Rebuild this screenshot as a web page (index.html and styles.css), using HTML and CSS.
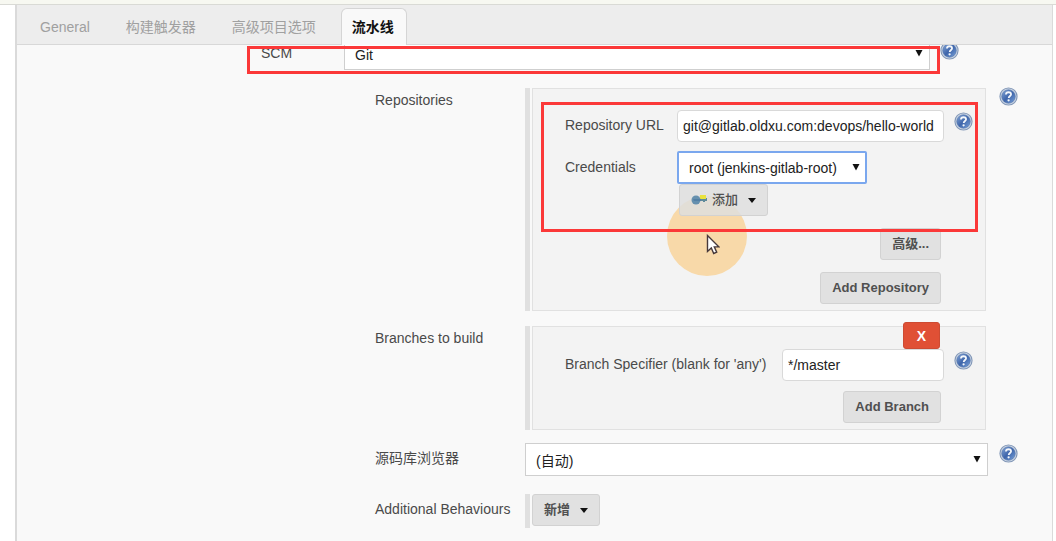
FILE: index.html
```html
<!DOCTYPE html>
<html lang="zh-CN">
<head>
<meta charset="utf-8">
<title>流水线</title>
<link rel="stylesheet" href="styles.css">
</head>
<body>
<svg class="sprite" aria-hidden="true">
  <defs>
    <linearGradient id="ball" x1="0" y1="0" x2="1" y2="1">
      <stop offset="0" stop-color="#86a8d8"/>
      <stop offset="0.5" stop-color="#3f66ab"/>
      <stop offset="1" stop-color="#7aa3da"/>
    </linearGradient>
  </defs>
  <symbol id="help" viewBox="0 0 20 20">
    <circle cx="10" cy="10" r="9" fill="#d3dce8" stroke="#8398b8" stroke-width="1.2"/>
    <circle cx="10" cy="10" r="7.2" fill="url(#ball)" stroke="#5574aa" stroke-width=".6"/>
    <path d="M7.3 7.9C7.4 6.2 8.500 5.500 10 5.500c1.600 0 2.700.8 2.700 2.200 0 1.700-2.300 1.900-2.500 3.900" fill="none" stroke="#f4f7fb" stroke-width="1.900"/>
    <circle cx="10.100" cy="14" r="1.200" fill="#f4f7fb"/>
  </symbol>
  <symbol id="arrow" viewBox="0 0 8 8"><path d="M.5 1h7L4 7.500z" fill="#111"/></symbol>
  <symbol id="caret" viewBox="0 0 8 5"><path d="M0 0h8L4 5z" fill="#111"/></symbol>
</svg>
<div class="breadcrumb-edge"></div>
<main class="panel">
  <nav class="tabs">
    <a class="tab" href="#general">General</a>
    <a class="tab" href="#triggers">构建触发器</a>
    <a class="tab" href="#advanced">高级项目选项</a>
    <a class="tab active" href="#pipeline">流水线</a>
  </nav>
  <form class="form">
    <div class="scm-row">
      <label for="scm">SCM</label>
      <div class="select-box">
        <select id="scm"><option>Git</option></select>
        <svg class="arrow"><use href="#arrow"/></svg>
      </div>
      <button type="button" class="help" aria-label="Help"><svg><use href="#help"/></svg></button>
      <div class="mark mark-scm"></div>
    </div>

    <section class="row">
      <span class="label">Repositories</span>
      <div class="chunk">
        <div class="card repo-card">
          <div class="halo"></div>
          <div class="field repo-field">
            <label for="url">Repository URL</label>
            <input id="url" type="text" value="git@gitlab.oldxu.com:devops/hello-world">
            <button type="button" class="help" aria-label="Help"><svg><use href="#help"/></svg></button>
          </div>
          <div class="field repo-field">
            <label for="cred">Credentials</label>
            <div class="cred">
              <div class="select-box focused">
                <select id="cred"><option>root (jenkins-gitlab-root)</option></select>
                <svg class="arrow"><use href="#arrow"/></svg>
              </div>
              <button type="button" class="btn add-cred">
                <svg class="key" viewBox="0 0 17 12"><path d="M7 4h9v3h-2v1h-2V7H7z" fill="#608b9b"/><path d="M9 1h6v4H9z" fill="#e9e23e"/><circle cx="5" cy="6" r="4.500" fill="#6690ae"/><path d="M2 5h8v2H3z" fill="#527fa5"/></svg>
                添加
                <svg class="caret"><use href="#caret"/></svg>
              </button>
            </div>
          </div>
          <div class="actions">
            <button type="button" class="btn">高级...</button>
            <button type="button" class="btn">Add Repository</button>
          </div>
          <div class="mark mark-repo"></div>
          <svg class="pointer" viewBox="0 0 14 21"><path d="M1.500 1.500v16l3.800-3.500 2.400 5.500 3-1.300-2.400-5.300h4.700z" fill="#fff" stroke="#47393b" stroke-width="1.400"/></svg>
        </div>
      </div>
      <button type="button" class="help" aria-label="Help"><svg><use href="#help"/></svg></button>
    </section>

    <section class="row">
      <span class="label">Branches to build</span>
      <div class="chunk">
        <div class="card branch-card">
          <button type="button" class="delete">X</button>
          <div class="field branch-field">
            <label for="branch">Branch Specifier (blank for 'any')</label>
            <input id="branch" type="text" value="*/master">
            <button type="button" class="help" aria-label="Help"><svg><use href="#help"/></svg></button>
          </div>
          <div class="actions">
            <button type="button" class="btn">Add Branch</button>
          </div>
        </div>
      </div>
    </section>

    <section class="row browser-row">
      <label class="label" for="browser">源码库浏览器</label>
      <div class="select-box">
        <select id="browser"><option>(自动)</option></select>
        <svg class="arrow"><use href="#arrow"/></svg>
      </div>
      <button type="button" class="help" aria-label="Help"><svg><use href="#help"/></svg></button>
    </section>

    <section class="row extra-row">
      <span class="label">Additional Behaviours</span>
      <div class="chunk">
        <button type="button" class="btn">新增 <svg class="caret"><use href="#caret"/></svg></button>
      </div>
    </section>
  </form>
</main>
</body>
</html>
```
FILE: styles.css
```css
* {
  box-sizing: border-box;
}

body {
  margin: 0;
  min-height: 100vh;
  display: flex;
  flex-direction: column;
  background: #fff;
  color: #4a4a4a;
  font: 14px/20px "Liberation Sans", Arial, "Noto Sans CJK SC", sans-serif;
}

.sprite {
  position: absolute;
  width: 0;
  height: 0;
}

.breadcrumb-edge {
  height: 5px;
  background: #f7f8f1;
  border-bottom: 1px solid #d9dad5;
}

.panel {
  flex: 1;
  margin: 0 3px 0 15px;
  border: solid #dadada;
  border-width: 0 1px 0 2px;
  background: #f9f9f9;
}

.tabs {
  display: flex;
  align-items: flex-end;
  height: 40px;
  padding-left: 10px;
  background: #ededed;
  border-bottom: 1px solid #d8d8d8;
}

.tab {
  height: 37px;
  margin-bottom: -1px;
  padding: 8px 12px 0;
  border: 1px solid transparent;
  border-bottom: 0;
  color: #a0a0a0;
  text-decoration: none;
}

.tab + .tab {
  margin-left: 10px;
}

.tab.active {
  margin-left: 12px;
  padding: 8px 12px 0 10px;
  border-color: #d5d5d5;
  border-radius: 6px 6px 0 0;
  background: #f9f9f9;
  color: #111;
  font-weight: bold;
}

.form {
  overflow: hidden;
  padding: 0 33px 12px 0;
}

.scm-row {
  position: relative;
  display: grid;
  grid-template-columns: 83px 1fr 20px;
  margin: -8px 60px 0 244px;
}

.scm-row > label {
  padding-top: 6px;
}

.scm-row > .help {
  margin: 4px 0 0 1px;
}

.scm-row > .select-box {
  margin-right: 9px;
}

.row {
  display: grid;
  grid-template-columns: 150px 1fr 31px;
  margin: 18px 0 0 358px;
}

.row + .row {
  margin-top: 15px;
}

.row.browser-row {
  margin-top: 13px;
}

.row.extra-row {
  margin-top: 18px;
}

.label {
  padding-top: 2px;
  white-space: nowrap;
}

.browser-row .label,
.extra-row .label {
  padding-top: 5px;
}

.chunk {
  margin-right: 2px;
  padding-left: 2px;
  border-left: 5px solid #e0e0e0;
}

.extra-row .chunk {
  height: 34px;
}

.row > .help {
  margin-left: 11px;
}

.row > .help:last-child {
  margin-top: -1px;
}

.browser-row > .help:last-child {
  margin-top: 1px;
}

.card {
  position: relative;
  padding: 21px 12px 6px 32px;
  border: 1px solid #e1e1e1;
  background: #f3f3f3;
}

.field {
  display: grid;
  align-items: start;
}

.field > label {
  padding-top: 5px;
}

.repo-field {
  grid-template-columns: 112px 1fr 29px;
}

.repo-field + .repo-field {
  margin-top: 9px;
}

.repo-field + .repo-field > label {
  padding-top: 6px;
}

.branch-field {
  grid-template-columns: 217px 1fr 29px;
}

.field > .help {
  margin: 2px 0 0 10px;
}

input,
select {
  display: block;
  width: 100%;
  margin: 0;
  background: #fff;
  color: #222;
  font: inherit;
}

input {
  height: 32px;
  padding: 0 5px;
  border: 1px solid #d9d9d9;
  border-radius: 4px;
}

select {
  height: 33px;
  padding: 3px 24px 0 10px;
  border: 1px solid #cfcfcf;
  border-radius: 0;
  appearance: none;
}

.select-box {
  position: relative;
}

.focused select {
  padding-top: 1px;
  border: 2px solid #7aa7ee;
  border-radius: 2px;
}

.arrow {
  position: absolute;
  right: 7px;
  top: 12px;
  width: 8px;
  height: 8px;
  pointer-events: none;
}

.cred {
  display: flex;
  flex-direction: column;
  align-items: flex-start;
}

.cred .select-box {
  width: 190px;
}

.btn {
  display: inline-flex;
  align-items: center;
  height: 32px;
  padding: 0 11px;
  border: 1px solid #d2d2d2;
  border-radius: 3px;
  background: #e1e1e1;
  color: #505050;
  font: bold 13px/20px "Liberation Sans", Arial, "Noto Sans CJK SC", sans-serif;
}

.add-cred {
  position: relative;
  margin-left: 2px;
  font-weight: 500;
  background: rgba(222, 222, 222, 0.85);
}

.key {
  width: 17px;
  height: 12px;
  margin-right: 4px;
}

.caret {
  width: 8px;
  height: 5px;
  margin-left: 10px;
}

.actions {
  display: flex;
  flex-direction: column;
  align-items: flex-end;
  gap: 12px;
  margin: 12px 32px 0 0;
}

.branch-card {
  padding-top: 22px;
}

.branch-card .actions {
  margin-top: 10px;
}

.delete {
  position: absolute;
  top: -5px;
  right: 45px;
  width: 37px;
  height: 27px;
  padding: 0;
  border: 1px solid #cd4b33;
  border-radius: 3px;
  background: #e05035;
  color: #fff;
  font: bold 14px/20px "Liberation Sans", Arial, sans-serif;
}

.help {
  width: 19px;
  height: 19px;
  padding: 0;
  border: 0;
  background: none;
}

.help svg {
  display: block;
  width: 19px;
  height: 19px;
}

.mark {
  position: absolute;
  border: 3px solid #fb3838;
  pointer-events: none;
}

.mark-scm {
  top: 9px;
  left: -14px;
  right: 19px;
  height: 28px;
}

.mark-repo {
  top: 13px;
  left: 8px;
  right: 7px;
  height: 130px;
}

.halo {
  position: absolute;
  top: 107px;
  left: 134px;
  width: 80px;
  height: 80px;
  border-radius: 50%;
  background: #f8d9a9;
}

.pointer {
  position: absolute;
  top: 145px;
  left: 173px;
  width: 14px;
  height: 21px;
}
```
